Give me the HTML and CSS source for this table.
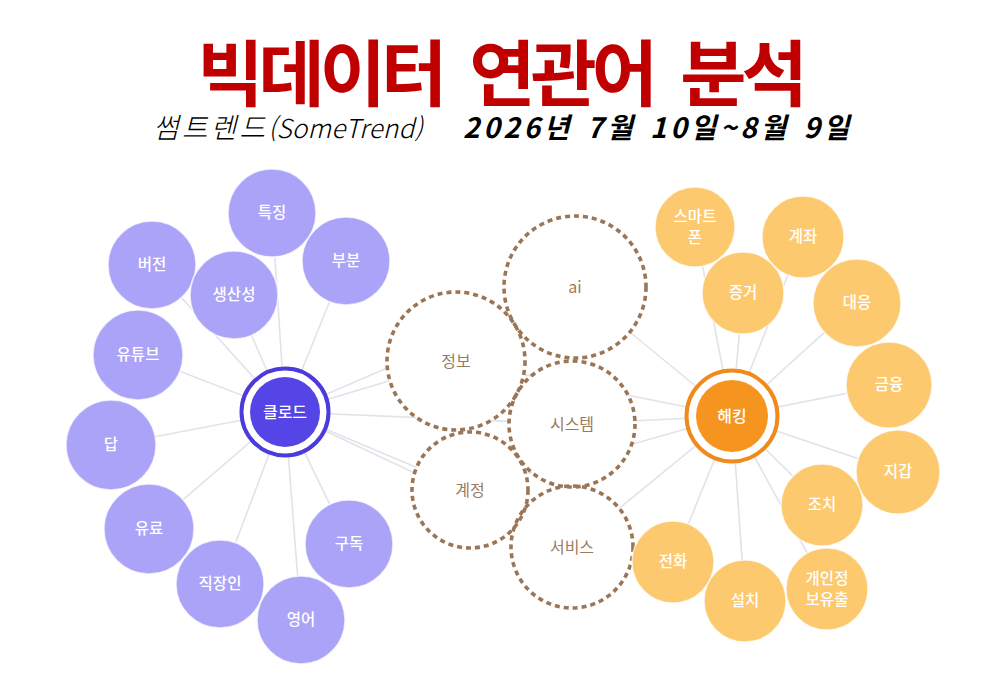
FILE: index.html
```html
<!DOCTYPE html>
<html lang="ko">
<head>
<meta charset="utf-8">
<title>빅데이터 연관어 분석</title>
<link rel="stylesheet" href="styles.css">
</head>
<body>
<header class="head">
  <h1 class="title">빅데이터 연관어 분석</h1>
  <p class="sub"><span class="src"><span class="src-ko">썸트렌드</span>(SomeTrend)</span><span class="date">2026년 7월 10일~8월 9일</span></p>
</header>
<svg class="graph" viewBox="0 160 1000 528" width="1000" height="528" xmlns="http://www.w3.org/2000/svg">
  <g class="links">
    <!-- left hub -->
    <line x1="285" y1="412" x2="272" y2="213"/>
    <line x1="285" y1="412" x2="346" y2="261"/>
    <line x1="285" y1="412" x2="152" y2="265"/>
    <line x1="285" y1="412" x2="234" y2="295"/>
    <line x1="285" y1="412" x2="138" y2="355"/>
    <line x1="285" y1="412" x2="111" y2="445"/>
    <line x1="285" y1="412" x2="149" y2="529"/>
    <line x1="285" y1="412" x2="220" y2="584"/>
    <line x1="285" y1="412" x2="301" y2="620"/>
    <line x1="285" y1="412" x2="349" y2="544"/>
    <line x1="285" y1="412" x2="575" y2="287"/>
    <line x1="285" y1="412" x2="456" y2="361"/>
    <line x1="285" y1="412" x2="572" y2="424"/>
    <line x1="285" y1="412" x2="470" y2="490"/>
    <line x1="285" y1="412" x2="572" y2="547"/>
    <!-- right hub -->
    <line x1="732" y1="416" x2="695" y2="227"/>
    <line x1="732" y1="416" x2="803" y2="237"/>
    <line x1="732" y1="416" x2="743" y2="293"/>
    <line x1="732" y1="416" x2="857" y2="303"/>
    <line x1="732" y1="416" x2="889" y2="385"/>
    <line x1="732" y1="416" x2="898" y2="472"/>
    <line x1="732" y1="416" x2="822" y2="505"/>
    <line x1="732" y1="416" x2="827" y2="589"/>
    <line x1="732" y1="416" x2="745" y2="601"/>
    <line x1="732" y1="416" x2="673" y2="562"/>
    <line x1="732" y1="416" x2="575" y2="287"/>
    <line x1="732" y1="416" x2="456" y2="361"/>
    <line x1="732" y1="416" x2="572" y2="424"/>
    <line x1="732" y1="416" x2="470" y2="490"/>
    <line x1="732" y1="416" x2="572" y2="547"/>
  </g>

  <g class="shared-fill">
    <circle cx="575" cy="287" r="71"/>
    <circle cx="456" cy="361" r="69"/>
    <circle cx="572" cy="424" r="63"/>
    <circle cx="470" cy="490" r="58"/>
    <circle cx="572" cy="547" r="61"/>
  </g>
  <g class="shared-ring">
    <circle cx="575" cy="287" r="71"/>
    <circle cx="456" cy="361" r="69"/>
    <circle cx="572" cy="424" r="63"/>
    <circle cx="470" cy="490" r="58"/>
    <circle cx="572" cy="547" r="61"/>
  </g>
  <g class="shared-text">
    <text x="575" y="287" dy="0.35em">ai</text>
    <text x="456" y="361" dy="0.35em">정보</text>
    <text x="572" y="424" dy="0.35em">시스템</text>
    <text x="470" y="490" dy="0.35em">계정</text>
    <text x="572" y="547" dy="0.35em">서비스</text>
  </g>

  <g class="node purple">
    <circle cx="152" cy="265" r="44"/><text x="152" y="265" dy="0.35em">버전</text>
    <circle cx="272" cy="213" r="44"/><text x="272" y="213" dy="0.35em">특징</text>
    <circle cx="346" cy="261" r="44"/><text x="346" y="261" dy="0.35em">부분</text>
    <circle cx="234" cy="295" r="44"/><text x="234" y="295" dy="0.35em">생산성</text>
    <circle cx="138" cy="355" r="45"/><text x="138" y="355" dy="0.35em">유튜브</text>
    <circle cx="111" cy="445" r="45"/><text x="111" y="445" dy="0.35em">답</text>
    <circle cx="149" cy="529" r="45"/><text x="149" y="529" dy="0.35em">유료</text>
    <circle cx="349" cy="544" r="44"/><text x="349" y="544" dy="0.35em">구독</text>
    <circle cx="220" cy="584" r="44"/><text x="220" y="584" dy="0.35em">직장인</text>
    <circle cx="301" cy="620" r="44"/><text x="301" y="620" dy="0.35em">영어</text>
  </g>

  <g class="node orange">
    <circle cx="695" cy="227" r="40"/><text x="695" y="217" dy="0.35em">스마트</text><text x="695" y="238" dy="0.35em">폰</text>
    <circle cx="803" cy="237" r="41"/><text x="803" y="237" dy="0.35em">계좌</text>
    <circle cx="743" cy="293" r="41"/><text x="743" y="293" dy="0.35em">증거</text>
    <circle cx="857" cy="303" r="44"/><text x="857" y="303" dy="0.35em">대응</text>
    <circle cx="889" cy="385" r="43"/><text x="889" y="385" dy="0.35em">금융</text>
    <circle cx="898" cy="472" r="42"/><text x="898" y="472" dy="0.35em">지갑</text>
    <circle cx="822" cy="505" r="41"/><text x="822" y="505" dy="0.35em">조치</text>
    <circle cx="673" cy="562" r="41"/><text x="673" y="562" dy="0.35em">전화</text>
    <circle cx="827" cy="589" r="41"/><text x="827" y="579" dy="0.35em">개인정</text><text x="827" y="600" dy="0.35em">보유출</text>
    <circle cx="745" cy="601" r="41"/><text x="745" y="601" dy="0.35em">설치</text>
  </g>

  <g class="hub hub-left">
    <circle class="hub-gap" cx="285" cy="412" r="45"/>
    <circle class="hub-ring" cx="285" cy="412" r="43.5"/>
    <circle class="hub-core" cx="285" cy="412" r="35"/>
    <text x="285" y="412" dy="0.35em">클로드</text>
  </g>
  <g class="hub hub-right">
    <circle class="hub-gap" cx="732" cy="416" r="47"/>
    <circle class="hub-ring" cx="732" cy="416" r="45.5"/>
    <circle class="hub-core" cx="732" cy="416" r="36"/>
    <text x="732" y="416" dy="0.35em">해킹</text>
  </g>
</svg>
</body>
</html>
```

FILE: styles.css
```css
* { box-sizing: border-box; }
html, body { margin: 0; padding: 0; background: #ffffff; }
body {
  width: 1000px;
  height: 688px;
  overflow: hidden;
  font-family: "Noto Sans CJK KR", "Noto Sans", sans-serif;
}
.head {
  height: 160px;
  display: flex;
  flex-direction: column;
  align-items: center;
  padding-top: 31px;
}
.title {
  margin: 0;
  font-size: 72px;
  line-height: 76px;
  font-weight: 700;
  color: #c00000;
  letter-spacing: -5px;
  word-spacing: 12px;
}
.sub {
  margin: 2px 0 0 6px;
  font-size: 28px;
  line-height: 34px;
  color: #000;
  font-style: italic;
  display: flex;
  align-items: baseline;
  gap: 40px;
}
.src { font-weight: 300; font-size: 26px; letter-spacing: 0.3px; }
.src-ko { font-size: 28px; letter-spacing: 3px; }
.date { font-weight: 700; letter-spacing: 3.7px; word-spacing: 2px; }
.graph { display: block; }
.links line { stroke: #e2e2ea; stroke-width: 1.6; }
.shared-fill circle { fill: #ffffff; }
.shared-ring circle {
  fill: none;
  stroke: #9b7656;
  stroke-width: 3.6;
  stroke-dasharray: 5 4;
}
.shared-text text {
  fill: #9b7a5e;
  font-size: 16px;
  text-anchor: middle;
}
.node circle { stroke: #ffffff; stroke-opacity: 0.7; stroke-width: 1.5; }
.node.purple circle { fill: #aba3f7; }
.node.orange circle { fill: #fcc96f; }
.node text, .hub text {
  fill: #ffffff;
  font-size: 15.5px;
  font-weight: 500;
  text-anchor: middle;
}
.hub text { font-size: 16px; }
.hub-gap { fill: #ffffff; }
.hub-left .hub-ring { fill: #ffffff; stroke: #4b3bdb; stroke-width: 4; }
.hub-left .hub-core { fill: #5544e6; }
.hub-right .hub-ring { fill: #ffffff; stroke: #f08a1a; stroke-width: 4; }
.hub-right .hub-core { fill: #f5951f; }
```
